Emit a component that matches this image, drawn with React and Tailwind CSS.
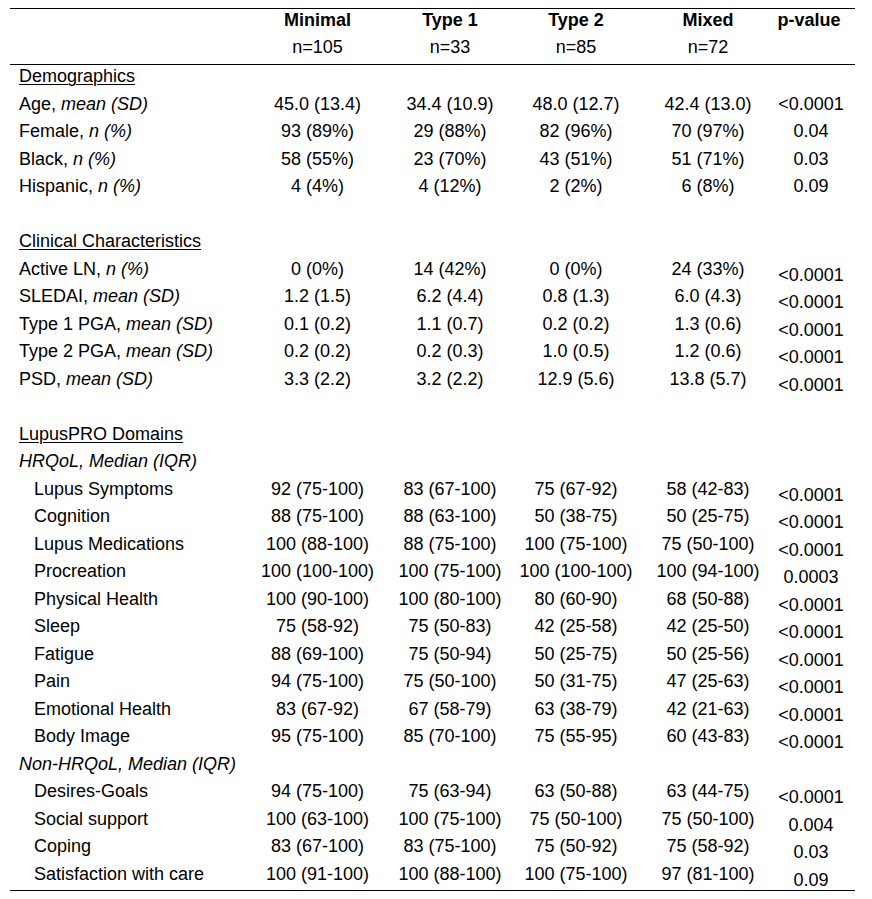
import React from "react";

const cols = "grid grid-cols-[241px_133px_132px_120px_144px_75px]";

const rows = [
  { t: "section", label: "Demographics" },
  { label: "Age, ", it: "mean (SD)", v: ["45.0 (13.4)", "34.4 (10.9)", "48.0 (12.7)", "42.4 (13.0)"], p: "<0.0001" },
  { label: "Female, ", it: "n (%)", v: ["93 (89%)", "29 (88%)", "82 (96%)", "70 (97%)"], p: "0.04" },
  { label: "Black, ", it: "n (%)", v: ["58 (55%)", "23 (70%)", "43 (51%)", "51 (71%)"], p: "0.03" },
  { label: "Hispanic, ", it: "n (%)", v: ["4 (4%)", "4 (12%)", "2 (2%)", "6 (8%)"], p: "0.09" },
  { t: "blank" },
  { t: "section", label: "Clinical Characteristics" },
  { label: "Active LN, ", it: "n (%)", v: ["0 (0%)", "14 (42%)", "0 (0%)", "24 (33%)"], p: "<0.0001", low: true },
  { label: "SLEDAI, ", it: "mean (SD)", v: ["1.2 (1.5)", "6.2 (4.4)", "0.8 (1.3)", "6.0 (4.3)"], p: "<0.0001", low: true },
  { label: "Type 1 PGA, ", it: "mean (SD)", v: ["0.1 (0.2)", "1.1 (0.7)", "0.2 (0.2)", "1.3 (0.6)"], p: "<0.0001", low: true },
  { label: "Type 2 PGA, ", it: "mean (SD)", v: ["0.2 (0.2)", "0.2 (0.3)", "1.0 (0.5)", "1.2 (0.6)"], p: "<0.0001", low: true },
  { label: "PSD, ", it: "mean (SD)", v: ["3.3 (2.2)", "3.2 (2.2)", "12.9 (5.6)", "13.8 (5.7)"], p: "<0.0001", low: true },
  { t: "blank" },
  { t: "section", label: "LupusPRO Domains" },
  { t: "sub", label: "HRQoL, Median (IQR)" },
  { ind: true, label: "Lupus Symptoms", v: ["92 (75-100)", "83 (67-100)", "75 (67-92)", "58 (42-83)"], p: "<0.0001", low: true },
  { ind: true, label: "Cognition", v: ["88 (75-100)", "88 (63-100)", "50 (38-75)", "50 (25-75)"], p: "<0.0001", low: true },
  { ind: true, label: "Lupus Medications", v: ["100 (88-100)", "88 (75-100)", "100 (75-100)", "75 (50-100)"], p: "<0.0001", low: true },
  { ind: true, label: "Procreation", v: ["100 (100-100)", "100 (75-100)", "100 (100-100)", "100 (94-100)"], p: "0.0003", low: true },
  { ind: true, label: "Physical Health", v: ["100 (90-100)", "100 (80-100)", "80 (60-90)", "68 (50-88)"], p: "<0.0001", low: true },
  { ind: true, label: "Sleep", v: ["75 (58-92)", "75 (50-83)", "42 (25-58)", "42 (25-50)"], p: "<0.0001", low: true },
  { ind: true, label: "Fatigue", v: ["88 (69-100)", "75 (50-94)", "50 (25-75)", "50 (25-56)"], p: "<0.0001", low: true },
  { ind: true, label: "Pain", v: ["94 (75-100)", "75 (50-100)", "50 (31-75)", "47 (25-63)"], p: "<0.0001", low: true },
  { ind: true, label: "Emotional Health", v: ["83 (67-92)", "67 (58-79)", "63 (38-79)", "42 (21-63)"], p: "<0.0001", low: true },
  { ind: true, label: "Body Image", v: ["95 (75-100)", "85 (70-100)", "75 (55-95)", "60 (43-83)"], p: "<0.0001", low: true },
  { t: "sub", label: "Non-HRQoL, Median (IQR)" },
  { ind: true, label: "Desires-Goals", v: ["94 (75-100)", "75 (63-94)", "63 (50-88)", "63 (44-75)"], p: "<0.0001", low: true },
  { ind: true, label: "Social support", v: ["100 (63-100)", "100 (75-100)", "75 (50-100)", "75 (50-100)"], p: "0.004", low: true },
  { ind: true, label: "Coping", v: ["83 (67-100)", "83 (75-100)", "75 (50-92)", "75 (58-92)"], p: "0.03", low: true },
  { ind: true, label: "Satisfaction with care", v: ["100 (91-100)", "100 (88-100)", "100 (75-100)", "97 (81-100)"], p: "0.09", low: true },
];

function Row({ r }) {
  if (r.t === "blank") return <div className="h-[27.5px]" />;
  if (r.t === "section")
    return (
      <div className={`${cols} h-[27.5px] items-center`}>
        <div className="pl-[9px] underline underline-offset-[2px] decoration-1 whitespace-nowrap">{r.label}</div>
      </div>
    );
  if (r.t === "sub")
    return (
      <div className={`${cols} h-[27.5px] items-center`}>
        <div className="pl-[9px] italic whitespace-nowrap">{r.label}</div>
      </div>
    );
  return (
    <div className={`${cols} h-[27.5px] items-center`}>
      <div className={`${r.ind ? "pl-[24px]" : "pl-[9px]"} whitespace-nowrap`}>
        {r.label}
        {r.it && <span className="italic">{r.it}</span>}
      </div>
      {r.v.map((x, i) => (
        <div key={i} className="flex justify-center whitespace-nowrap">{x}</div>
      ))}
      <div className={`flex justify-center whitespace-nowrap pr-[13px] ${r.low ? "translate-y-[6px]" : ""}`}>{r.p}</div>
    </div>
  );
}

export default function App() {
  return (
    <div className="w-[872px] h-[899px] bg-white text-black overflow-hidden font-['Liberation_Sans',Arial,sans-serif] text-[18px] leading-[27.5px]">
      <div className="ml-[10px] mt-[8px] w-[845px] border-t border-black">
        <div className={`${cols} h-[23px] leading-[23px] items-center font-bold`}>
          <div />
          <div className="flex justify-center">Minimal</div>
          <div className="flex justify-center">Type 1</div>
          <div className="flex justify-center">Type 2</div>
          <div className="flex justify-center">Mixed</div>
          <div className="flex justify-center whitespace-nowrap pr-[17px]">p-value</div>
        </div>
        <div className={`${cols} h-[32px] leading-[30px] items-start`}>
          <div />
          <div className="flex justify-center">n=105</div>
          <div className="flex justify-center">n=33</div>
          <div className="flex justify-center">n=85</div>
          <div className="flex justify-center">n=72</div>
          <div />
        </div>
        <div className="border-t border-black" />
        <div className="-mt-[2px]">
          {rows.map((r, i) => (
            <Row key={i} r={r} />
          ))}
        </div>
        <div className="mt-[2px] border-t border-black" />
      </div>
    </div>
  );
}
